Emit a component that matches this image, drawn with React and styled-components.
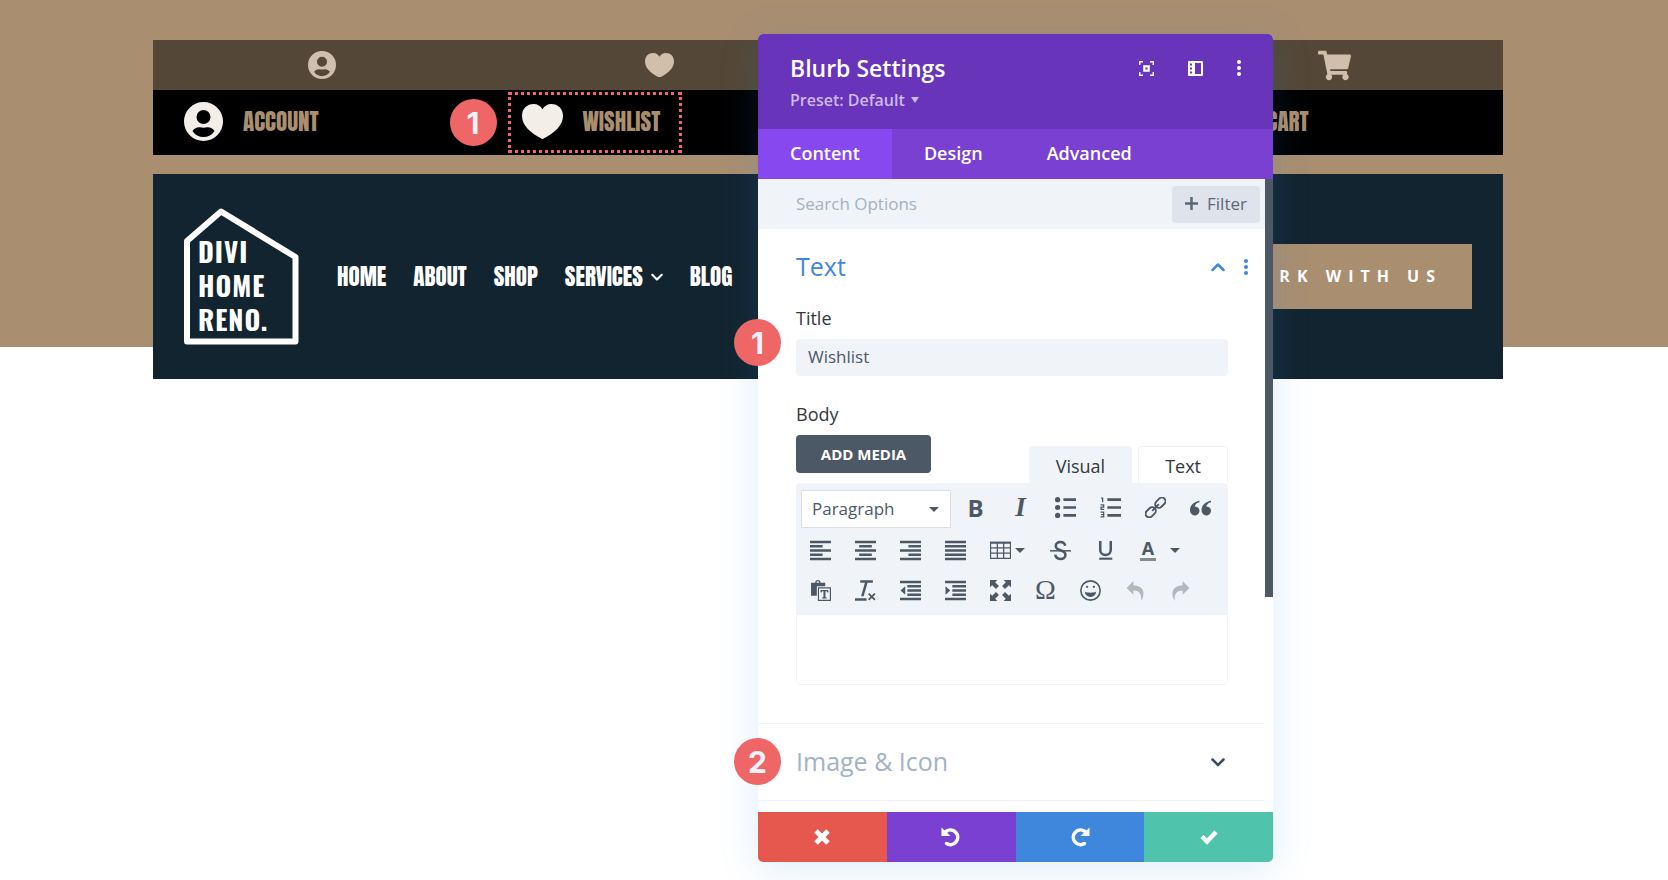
import React, { useState } from 'react'
import styled, { createGlobalStyle } from 'styled-components';
import { FaShoppingCart } from 'react-icons/fa';


const modalTabs = ['Content', 'Design', 'Advanced'];

const AccountIcon = ({ size }) => (
  <svg width={size} height={size} viewBox="0 0 39 39" fill="currentColor" fillRule="evenodd">
    <path d="M19.5 0a19.5 19.5 0 1 1 0 39a19.5 19.5 0 1 1 0-39zM19.5 8a7 7 0 1 0 0 14a7 7 0 1 0 0-14zM8.5 29C11 33 15 35 19.5 35S28 33 30.5 29C28.5 26 26 25 23 25.3C20.5 25.9 18.500 25.9 16 25.3C13 25 10.500 26 8.500 29z" />
  </svg>
)

const HeartIcon = ({ size }) => (
  <svg width={size} viewBox="0 0 42 36" fill="currentColor">
    <path d="M21 36C8 29 0 22 0 12C0 5 5 0 12 0C16 0 19 2 21 5.500C23 2 26 0 30 0C37 0 42 5 42 12C42 22 34 29 21 36z" />
  </svg>
)

const Dots = () => (
  <svg width="4" height="16" viewBox="0 0 4 16" fill="currentColor">
    <circle cx="2" cy="2" r="2" />
    <circle cx="2" cy="8" r="2" />
    <circle cx="2" cy="14" r="2" />
  </svg>
)

const Chevron = ({ up, size = 14 }) => (
  <svg width={size} height={size} viewBox="0 0 14 14" fill="none" stroke="currentColor" strokeWidth="2.500" strokeLinecap="round" strokeLinejoin="round">
    <path d={up ? 'M1.500 10L7 4.500L12.500 10' : 'M1.500 4.500L7 10L12.500 4.500'} />
  </svg>
)

const Caret = () => (
  <svg width="10" height="5" viewBox="0 0 10 5" fill="currentColor">
    <path d="M0 0h10L5 5z" />
  </svg>
)

// toolbar icon, 20 unit grid
const Tool = ({ children, fill }) => (
  <svg width="21" height="21" viewBox="0 0 20 20" fill={fill ? 'currentColor' : 'none'} stroke={fill ? 'none' : 'currentColor'} strokeWidth="2.400">
    {children}
  </svg>
)

const App = () => {
  const [tab, setTab] = useState('Content');
  const [title, setTitle] = useState('Wishlist');
  const [body, setBody] = useState('');

  return (
    <Page>
      <GlobalStyle />
      <Container>
        <IconBar>
          <IconCell><AccountIcon size={28} /></IconCell>
          <IconCell><HeartIcon size={29} /></IconCell>
          <IconCell />
          <IconCell><FaShoppingCart size={33} /></IconCell>
        </IconBar>
        <BlurbBar>
          <Blurb><BlurbIcon><AccountIcon size={39} /></BlurbIcon>Account</Blurb>
          <Blurb>
            <BlurbIcon><HeartIcon size={41} /></BlurbIcon>Wishlist
            <Highlight />
            <BlurbBadge>1</BlurbBadge>
          </Blurb>
          <Blurb />
          <Blurb><BlurbIcon><FaShoppingCart size={50} /></BlurbIcon>Cart</Blurb>
        </BlurbBar>

        <Header>
          <Logo>
            <svg width="115" height="137" viewBox="0 0 115 137" fill="none" stroke="#fff" strokeWidth="6" strokeLinejoin="round">
              <path d="M3 33L37 3.500L111.500 49V133.500H3z" />
            </svg>
            <LogoText>
              <div>DIVI</div>
              <div>HOME</div>
              <div>RENO.</div>
            </LogoText>
          </Logo>
          <Nav>
            <NavLink href="#home">Home</NavLink>
            <NavLink href="#about">About</NavLink>
            <NavLink href="#shop">Shop</NavLink>
            <NavLink href="#services">Services<Chevron size={12} /></NavLink>
            <NavLink href="#blog">Blog</NavLink>
          </Nav>
          <WorkButton href="#work">Work with us</WorkButton>
        </Header>
      </Container>

      <Modal>
        <ModalHeader>
          <div>
            <ModalTitle>Blurb Settings</ModalTitle>
            <Preset>Preset: Default <svg width="8" height="6" viewBox="0 0 8 6" fill="currentColor"><path d="M0 0h8L4 6z" /></svg></Preset>
          </div>
          <HeaderActions>
            <PlainButton aria-label="Expand">
              <svg width="15" height="15" viewBox="0 0 15 15" fill="none" stroke="currentColor">
                <path d="M.7 4V.7H4M11 .7h3.300V4M14.300 11v3.300H11M4 14.300H.7V11" strokeWidth="1.500" />
                <path d="M5.300 5.300h4.400v4.400h-4.400z" strokeWidth="2.200" />
              </svg>
            </PlainButton>
            <PlainButton aria-label="Snap to side">
              <svg width="15" height="15" viewBox="0 0 15 15" fill="currentColor" fillRule="evenodd">
                <path d="M1 0h13q1 0 1 1v13q0 1-1 1H1q-1 0-1-1V1q0-1 1-1zM7 2v11h6V2zM2 2.500v2h2v-2zM2 6.500v2h2v-2zM2 10.500v2h2v-2z" />
              </svg>
            </PlainButton>
            <PlainButton aria-label="More"><Dots /></PlainButton>
          </HeaderActions>
        </ModalHeader>

        <Tabs>
          {modalTabs.map((name) => (
            <Tab key={name} $active={tab === name} onClick={() => setTab(name)}>{name}</Tab>
          ))}
        </Tabs>

        <ModalBody>
          <Options>
            <SearchRow>
              <SearchInput placeholder="Search Options" aria-label="Search Options" />
              <FilterButton>
                <svg width="13" height="13" viewBox="0 0 13 13" stroke="currentColor" strokeWidth="2.500"><path d="M6.500 0v13M0 6.500h13" /></svg>
                Filter
              </FilterButton>
            </SearchRow>

            <Section>
              <SectionHead>
                <SectionTitle $open>Text</SectionTitle>
                <SectionActions $open>
                  <PlainButton aria-label="Collapse"><Chevron up /></PlainButton>
                  <PlainButton aria-label="Text options"><Dots /></PlainButton>
                </SectionActions>
              </SectionHead>
              <Fields>
                <Field>
                  <Label htmlFor="title">Title</Label>
                  <TextInput id="title" value={title} onChange={(event) => setTitle(event.target.value)} />
                </Field>
                <Field>
                  <Label htmlFor="body">Body</Label>
                  <EditorTop>
                    <MediaButton>Add Media</MediaButton>
                    <EditorTabs>
                      <EditorTab $active>Visual</EditorTab>
                      <EditorTab>Text</EditorTab>
                    </EditorTabs>
                  </EditorTop>
                  <Toolbar>
                    <FormatRow $height={38}>
                      <SelectWrap>
                        <FormatSelect aria-label="Format" defaultValue="Paragraph">
                          <option>Paragraph</option>
                          <option>Heading 1</option>
                          <option>Heading 2</option>
                        </FormatSelect>
                        <Caret />
                      </SelectWrap>
                      <BoldButton>B</BoldButton>
                      <ItalicButton>I</ItalicButton>
                      <ToolButton aria-label="Bulleted list">
                        <Tool>
                          <path d="M8 2.500h12M8 10h12M8 17.500h12" />
                          <path d="M2.500 2.500h.01M2.500 10h.01M2.500 17.500h.01" strokeWidth="5" strokeLinecap="round" />
                        </Tool>
                      </ToolButton>
                      <ToolButton aria-label="Numbered list">
                        <Tool>
                          <path d="M7 2.500h13M7 10h13M7 17.500h13" />
                          <path d="M1 1h1.500v4M.5 7.500h3v2.200h-2.500v2h3M.5 14.500h3v4.500h-3M1 16.700h2.500" strokeWidth="1.200" />
                        </Tool>
                      </ToolButton>
                      <ToolButton aria-label="Link">
                        <Tool>
                          <g transform="rotate(-45 10 10)" strokeWidth="1.800">
                            <rect x="-2" y="6.500" width="11" height="7" rx="3.500" />
                            <rect x="11" y="6.500" width="11" height="7" rx="3.500" />
                            <path d="M5.500 10h9" />
                          </g>
                        </Tool>
                      </ToolButton>
                      <ToolButton aria-label="Quote">
                        <Tool fill>
                          <path d="M9 3.500C5 4 0 7 0 12.500C0 15.500 2 17.500 4.500 17.500S9 15.500 9 13S7 9 4.500 9C5 7 6.500 5.500 9 5zM20 3.500C16 4 11 7 11 12.500C11 15.500 13 17.500 15.500 17.500S20 15.500 20 13S18 9 15.500 9C16 7 17.500 5.500 20 5z" />
                        </Tool>
                      </ToolButton>
                    </FormatRow>
                    <ToolRow $height={44}>
                      <ToolButton aria-label="Align left"><Tool><path d="M0 2h20M0 6h12M0 10h20M0 14h12M0 18h20" /></Tool></ToolButton>
                      <ToolButton aria-label="Align center"><Tool><path d="M0 2h20M4 6h12M0 10h20M4 14h12M0 18h20" /></Tool></ToolButton>
                      <ToolButton aria-label="Align right"><Tool><path d="M0 2h20M8 6h12M0 10h20M8 14h12M0 18h20" /></Tool></ToolButton>
                      <ToolButton aria-label="Justify"><Tool><path d="M0 2h20M0 6h20M0 10h20M0 14h20M0 18h20" /></Tool></ToolButton>
                      <SplitButton aria-label="Table" $gap={4}>
                        <Tool>
                          <path d="M.5 2.500h19v15H.5zM.5 7.500h19M.5 12.500h19M7 3v15M13 3v15" strokeWidth="1.200" />
                          <path d="M0 2.500h20" strokeWidth="2" />
                        </Tool>
                        <Caret />
                      </SplitButton>
                      <ToolButton aria-label="Strikethrough">
                        <Tool>
                          <path d="M14.500 5.500C14 3 12 2 10 2C7.500 2 5.500 3.300 5.500 5.800C5.500 8.500 8 9.200 10 9.800C12.500 10.500 14.700 11.500 14.700 14.200C14.700 16.700 12.500 18 10 18S5.300 16.700 5 14" />
                          <path d="M0 10.300h20" strokeWidth="1.400" />
                        </Tool>
                      </ToolButton>
                      <ToolButton aria-label="Underline">
                        <Tool><path d="M5 1v8.500a5 4.800 0 0 0 10 0V1" /><path d="M4 17.800h12.500" strokeWidth="2" /></Tool>
                      </ToolButton>
                      <SplitButton aria-label="Text color" $gap={14}>
                        <ColorLetter>A</ColorLetter>
                        <Caret />
                      </SplitButton>
                    </ToolRow>
                    <ToolRow $height={36}>
                      <ToolButton aria-label="Paste as text">
                        <Tool fill>
                          <path fillRule="evenodd" d="M1 2.500h4a2.500 2.500 0 0 1 5 0h4.500V6H6.500v9H1zM6.200 2.500h2.600a1.300 1.300 0 0 0-2.600 0z" />
                          <path fillRule="evenodd" d="M7.500 7H20v13H7.500zM8.600 8.100v10.800h10.300V8.100z" />
                          <path d="M10 9.500h7.500v2.500h-1l-.5-1.300h-1.300v5.800l1.300.2v.8h-4.500v-.8l1.300-.2v-5.800h-1.300L11 12h-1z" />
                        </Tool>
                      </ToolButton>
                      <ToolButton aria-label="Clear formatting">
                        <Tool><path d="M5 1.500h12M11 1.500L7 15.500M0 18.500h11" /><path d="M13 13l6 6M19 13l-6 6" strokeWidth="1.700" /></Tool>
                      </ToolButton>
                      <ToolButton aria-label="Outdent">
                        <Tool><path d="M0 2h20M7 6h13M7 10h13M7 14h13M0 18h20" /><path d="M5 6v8L.5 10z" fill="currentColor" stroke="none" /></Tool>
                      </ToolButton>
                      <ToolButton aria-label="Indent">
                        <Tool><path d="M0 2h20M7 6h13M7 10h13M7 14h13M0 18h20" /><path d="M.5 6v8L5 10z" fill="currentColor" stroke="none" /></Tool>
                      </ToolButton>
                      <ToolButton aria-label="Fullscreen">
                        <Tool fill>
                          <path d="M0 0h7L4.900 2.100L8.500 5.700L5.700 8.500L2.100 4.900L0 7zM20 0h-7l2.100 2.100L11.500 5.700l2.800 2.800l3.600-3.600L20 7zM0 20h7l-2.100-2.100L8.500 14.300l-2.800-2.800l-3.600 3.600L0 13zM20 20h-7l2.100-2.100L11.500 14.300l2.800-2.800l3.600 3.600L20 13z" />
                        </Tool>
                      </ToolButton>
                      <OmegaButton>Ω</OmegaButton>
                      <ToolButton aria-label="Emoticons">
                        <Tool>
                          <circle cx="10" cy="10" r="9.200" strokeWidth="1.500" />
                          <path d="M6.800 6.500h.01M13.200 6.500h.01" strokeLinecap="round" strokeWidth="2.200" />
                          <path d="M4.500 11C6 12.500 14 12.500 15.500 11C15 14.500 13 16.200 10 16.200S5 14.500 4.500 11z" fill="currentColor" stroke="none" />
                        </Tool>
                      </ToolButton>
                      <ToolButton aria-label="Undo" disabled>
                        <Tool fill><path d="M8 1L1.500 7.500L8 14V10C13.500 10 16 13 15.500 20C20 12 17.500 5.500 8 5z" /></Tool>
                      </ToolButton>
                      <ToolButton aria-label="Redo" disabled>
                        <Tool fill><path d="M12 1l6.500 6.500L12 14V10C6.500 10 4 13 4.500 20C0 12 2.500 5.500 12 5z" /></Tool>
                      </ToolButton>
                    </ToolRow>
                  </Toolbar>
                  <BodyArea id="body" value={body} onChange={(event) => setBody(event.target.value)} />
                </Field>
              </Fields>
              <TitleBadge>1</TitleBadge>
            </Section>

            <Section>
              <SectionHead>
                <SectionTitle>Image &amp; Icon</SectionTitle>
                <SectionActions>
                  <PlainButton aria-label="Expand Image and Icon"><Chevron /></PlainButton>
                </SectionActions>
              </SectionHead>
              <ImageBadge>2</ImageBadge>
            </Section>
          </Options>
          <ScrollTrack><ScrollThumb /></ScrollTrack>
        </ModalBody>

        <Footer>
          <FooterButton $color="#e6574e" aria-label="Discard">
            <svg width="16" height="16" viewBox="0 0 16 16" fill="none" stroke="currentColor" strokeWidth="5" strokeLinejoin="round"><path d="M2 2l12 12M14 2L2 14" /></svg>
          </FooterButton>
          <FooterButton $color="#7a40d2" aria-label="Undo">
            <svg width="20" height="20" viewBox="0 0 20 20" fill="none" stroke="currentColor" strokeWidth="3.500"><path d="M5 4.500A7.300 7.300 0 1 1 5.500 16.500" strokeLinecap="round" /><path d="M.5.5V9h9z" fill="currentColor" stroke="none" /></svg>
          </FooterButton>
          <FooterButton $color="#3e87dc" aria-label="Redo">
            <svg width="20" height="20" viewBox="0 0 20 20" fill="none" stroke="currentColor" strokeWidth="3.500"><path d="M15 4.500A7.300 7.300 0 1 0 14.500 16.500" strokeLinecap="round" /><path d="M19.500.5V9h-9z" fill="currentColor" stroke="none" /></svg>
          </FooterButton>
          <FooterButton $color="#4fc3ab" aria-label="Save">
            <svg width="18" height="16" viewBox="0 0 18 16" fill="none" stroke="currentColor" strokeWidth="4.500"><path d="M2 7.500l5 5L16 3" /></svg>
          </FooterButton>
        </Footer>
      </Modal>
    </Page>
  )
}

export default App;

const GlobalStyle = createGlobalStyle`
  * {
    box-sizing: border-box;
  }
  body {
    margin: 0;
    font-family: 'Open Sans', sans-serif;
  }
  svg {
    display: block;
    flex-shrink: 0;
  }
  button, input, select, textarea {
    font-family: inherit;
    margin: 0;
  }
`

const Page = styled.div`
  position: relative;
  min-height: 100vh;
  padding: 40px 12px 0 0;
  overflow: hidden;
  background: linear-gradient(#a98e70 0 347px, #fff 347px);
`

const Container = styled.div`
  max-width: 1350px;
  margin: 0 auto;
`

const IconBar = styled.div`
  display: grid;
  grid-template-columns: repeat(4, 1fr);
  height: 50px;
  background: #554737;
  color: #cfbfac;
`

const IconCell = styled.div`
  display: flex;
  align-items: center;
  justify-content: center;
`

const BlurbBar = styled.div`
  display: grid;
  grid-template-columns: repeat(4, 1fr);
  height: 65px;
  background: #000;
`

const Blurb = styled.div`
  position: relative;
  display: flex;
  align-items: center;
  gap: 20px;
  padding: 0 0 2px 31px;
  color: #a98e70;
  font-family: 'Anton', sans-serif;
  font-size: 23px;
  text-transform: uppercase;
`

const BlurbIcon = styled.span`
  color: #f3eee8;
`

const Highlight = styled.span`
  position: absolute;
  left: 17px;
  top: 2px;
  width: 174px;
  height: 61px;
  border: 3px dotted #ef6667;
`

const Badge = styled.span`
  position: absolute;
  display: flex;
  align-items: center;
  justify-content: center;
  width: 47px;
  height: 47px;
  border-radius: 50%;
  background: #ef6667;
  color: #f0f2fa;
  font: bold 30px 'Inter', sans-serif;
`

const BlurbBadge = styled(Badge)`
  left: -41px;
  top: 9px;
`

const TitleBadge = styled(Badge)`
  left: -24px;
  top: 90px;
`

const ImageBadge = styled(Badge)`
  left: -24px;
  top: 14px;
`

const Header = styled.header`
  display: flex;
  align-items: center;
  height: 205px;
  margin-top: 19px;
  padding: 0 31px;
  background: #12242f;
`

const Logo = styled.div`
  display: grid;

  & > * {
    grid-area: 1 / 1;
  }
`

const LogoText = styled.div`
  padding: 26px 0 0 14px;
  color: #fff;
  font-family: 'Oswald', sans-serif;
  font-size: 27px;
  font-weight: 700;
  line-height: 34px;
  letter-spacing: 1px;
`

const Nav = styled.nav`
  display: flex;
  gap: 27px;
  margin-left: 38px;
`

const NavLink = styled.a`
  display: flex;
  align-items: center;
  gap: 8px;
  color: #fff;
  font-family: 'Anton', sans-serif;
  font-size: 23px;
  text-decoration: none;
  text-transform: uppercase;
`

const WorkButton = styled.a`
  margin-left: auto;
  padding: 0 30px;
  background: #a98e70;
  color: #fff;
  font-size: 16px;
  font-weight: 700;
  line-height: 65px;
  letter-spacing: 7px;
  text-decoration: none;
  text-transform: uppercase;
`

const Modal = styled.section`
  position: absolute;
  left: calc(50% - 76px);
  top: 34px;
  width: 515px;
  border-radius: 5px;
  background: #fff;
  box-shadow: 0 6px 40px rgba(43, 135, 218, 0.16);
`

const ModalHeader = styled.div`
  display: flex;
  justify-content: space-between;
  height: 95px;
  padding: 18px 32px 0;
  border-radius: 5px 5px 0 0;
  background: #6834b9;
  color: #fff;
`

const ModalTitle = styled.h2`
  margin: 0;
  font-size: 23px;
  font-weight: 600;
  line-height: 32px;
`

const Preset = styled.div`
  display: flex;
  align-items: center;
  gap: 6px;
  color: #cdb9ec;
  font-size: 16px;
  font-weight: 600;
  line-height: 32px;
`

const HeaderActions = styled.div`
  display: flex;
  gap: 34px;
  height: 32px;
`

const PlainButton = styled.button`
  display: flex;
  align-items: center;
  padding: 0;
  border: 0;
  background: none;
  color: inherit;
`

const Tabs = styled.div`
  display: flex;
  height: 50px;
  background: #7940d2;
`

const Tab = styled.button`
  padding: 0 32px 2px;
  border: 0;
  background: ${(p) => (p.$active ? '#8848ef' : 'transparent')};
  color: #fff;
  font-size: 18px;
  font-weight: 600;
`

const ModalBody = styled.div`
  display: flex;
  height: 633px;
`

const Options = styled.div`
  flex: 1;
  min-width: 0;
`

const SearchRow = styled.div`
  display: flex;
  align-items: center;
  height: 50px;
  padding: 0 5px 0 38px;
  background: #f0f4f9;
`

const SearchInput = styled.input`
  flex: 1;
  min-width: 0;
  padding: 0 0 2px;
  border: 0;
  background: none;
  font-size: 17px;

  &::placeholder {
    color: #a3b1c2;
  }
`

const FilterButton = styled.button`
  display: flex;
  align-items: center;
  justify-content: center;
  gap: 9px;
  width: 88px;
  height: 37px;
  padding: 0 0 2px;
  border: 0;
  border-radius: 4px;
  background: #dfe3eb;
  color: #5c6978;
  font-size: 17px;
`

const Section = styled.div`
  position: relative;
  border-bottom: 1px solid #f0f3f6;
`

const SectionHead = styled.div`
  display: flex;
  align-items: center;
  justify-content: space-between;
  height: 76px;
  padding: 0 17px 0 38px;
`

const SectionTitle = styled.h3`
  margin: 0;
  padding-bottom: 2px;
  color: ${(p) => (p.$open ? '#3e87dc' : '#a3b1c6')};
  font-size: 25px;
  font-weight: 400;
`

const SectionActions = styled.div`
  display: flex;
  align-items: center;
  gap: 19px;
  padding-right: ${(p) => (p.$open ? 0 : 23)}px;
  color: ${(p) => (p.$open ? '#3e87dc' : '#3d4b5c')};
`

const Fields = styled.div`
  display: flex;
  flex-direction: column;
  gap: 25px;
  padding: 0 37px 38px 38px;
`

const Field = styled.div`
  display: flex;
  flex-direction: column;
`

const Label = styled.label`
  margin-bottom: 8px;
  color: #32373c;
  font-size: 18px;
  line-height: 26px;
`

const TextInput = styled.input`
  height: 37px;
  padding: 0 12px 2px;
  border: 0;
  border-radius: 4px;
  background: #f0f3f8;
  color: #4c5866;
  font-size: 17px;
`

const EditorTop = styled.div`
  display: flex;
  justify-content: space-between;
  height: 48px;
`

const MediaButton = styled.button`
  width: 135px;
  height: 38px;
  padding: 0;
  border: 0;
  border-radius: 4px;
  background: #4c5866;
  color: #fff;
  font-size: 15px;
  font-weight: 700;
  text-transform: uppercase;
`

const EditorTabs = styled.div`
  display: flex;
  align-items: flex-end;
  gap: 6px;
`

const EditorTab = styled.button`
  height: 37px;
  padding: 2px 26px 0;
  border: 1px solid #f0f4f9;
  border-bottom: 0;
  border-radius: 4px 4px 0 0;
  background: ${(p) => (p.$active ? '#f0f4f9' : '#fff')};
  color: #32373c;
  font-size: 18px;
`

const Toolbar = styled.div`
  padding: 7px 0 6px 2px;
  border-radius: 4px 4px 0 0;
  background: #f0f4f9;
  color: #4c5866;
`

const ToolRow = styled.div`
  display: flex;
  align-items: center;
  height: ${(p) => p.$height}px;
`

const FormatRow = styled(ToolRow)`
  align-items: flex-start;
`

const SelectWrap = styled.div`
  display: grid;
  align-items: center;
  width: 150px;
  margin: 0 2px 0 3px;

  & > * {
    grid-area: 1 / 1;
  }
  & > svg {
    justify-self: end;
    margin-right: 12px;
    pointer-events: none;
  }
`

const FormatSelect = styled.select`
  height: 38px;
  padding: 0 10px 2px;
  appearance: none;
  border: 1px solid #dcdfe3;
  border-radius: 0;
  background: #fff;
  color: #4c5866;
  font-size: 17px;
`

const ToolButton = styled.button`
  display: flex;
  align-items: center;
  justify-content: center;
  width: 45px;
  height: 34px;
  padding: 0;
  border: 0;
  background: none;
  color: #4c5866;

  &:disabled {
    color: #b2b8c0;
  }
`

const BoldButton = styled(ToolButton)`
  font-family: 'Open Sans', sans-serif;
  font-size: 24px;
  font-weight: 700;
`

const ItalicButton = styled(ToolButton)`
  font-family: 'Liberation Serif', serif;
  font-size: 27px;
  font-style: italic;
  font-weight: 700;
`

const OmegaButton = styled(ToolButton)`
  font-family: 'Liberation Serif', serif;
  font-size: 28px;
`

const SplitButton = styled(ToolButton)`
  justify-content: flex-start;
  gap: ${(p) => p.$gap}px;
  width: 60px;
  padding-left: 12px;
`

const ColorLetter = styled.span`
  width: 16px;
  border-bottom: 3px solid #868b92;
  font-size: 18px;
  font-weight: 700;
  line-height: 19px;
  text-align: center;
`

const BodyArea = styled.textarea`
  height: 71px;
  padding: 10px;
  border: 1px solid #f0f4f9;
  border-radius: 0 0 4px 4px;
  resize: none;
`

const ScrollTrack = styled.div`
  width: 8px;
`

const ScrollThumb = styled.div`
  height: 66%;
  background: #4c5866;
`

const Footer = styled.div`
  display: grid;
  grid-template-columns: repeat(4, 1fr);
  height: 50px;
  overflow: hidden;
  border-radius: 0 0 5px 5px;
`

const FooterButton = styled.button`
  display: flex;
  align-items: center;
  justify-content: center;
  border: 0;
  background: ${(p) => p.$color};
  color: #fff;
`
